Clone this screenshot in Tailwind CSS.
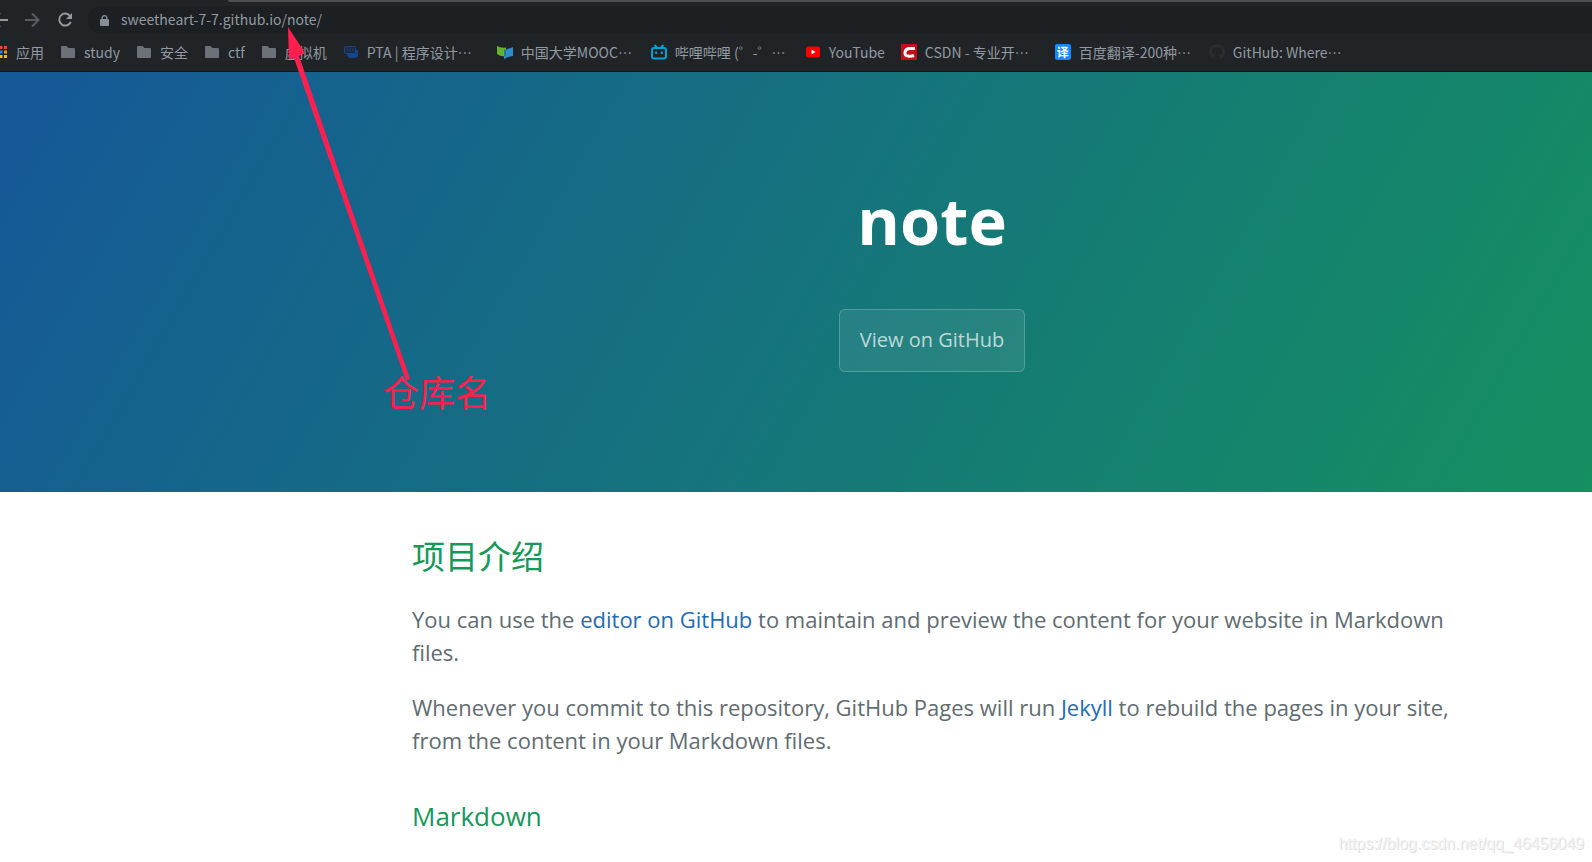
<!DOCTYPE html>
<html lang="zh-CN">

<head>
    <meta charset="UTF-8">
    <meta name="viewport" content="width=device-width, initial-scale=1.0">
    <title>note</title>
    <script src="https://cdn.jsdelivr.net/npm/@tailwindcss/browser@4"></script>
</head>

<body class="relative min-h-screen bg-white font-['Open_Sans','Noto_Sans_CJK_SC',sans-serif]">
    <!-- browser toolbar -->
    <div class="overflow-hidden bg-[#202427] border-b border-[#15191b] pb-px text-sm text-[#9299a1] font-['Noto_Sans_CJK_SC',sans-serif]">
        <div class="h-[6px]">
            <div class="ml-[228px] h-[2px] rounded-bl bg-[#4b4e52]"></div>
        </div>
        <div class="flex h-7 items-center">
            <button class="-ml-2 mr-4 text-[#9299a1]" aria-label="Back">
                <svg class="size-4" viewBox="0 0 16 16" fill="none" stroke="currentColor" stroke-width="2"><path d="M16 8H2M8 1L1.500 8L8 15"/></svg>
            </button>
            <button class="mr-[17px] text-[#565c61]" aria-label="Forward">
                <svg class="size-4" viewBox="0 0 16 16" fill="none" stroke="currentColor" stroke-width="2"><path d="M1 8H14M8 1.500L14.500 8L8 14.500"/></svg>
            </button>
            <button class="mr-[15px] text-[#9299a1]" aria-label="Reload">
                <svg class="size-4" viewBox="0 0 16 16"><path fill="none" stroke="currentColor" stroke-width="2" d="M13.200 4.200A6 6 0 1 0 13.800 9.800"/><path fill="currentColor" d="M15 1V7H9z"/></svg>
            </button>
            <div class="flex h-7 flex-1 items-center rounded-l-full bg-[#1c2022] pl-3">
                <svg class="mr-3 h-[11px] w-[9px]" viewBox="0 0 9 11" fill="#868d95"><path d="M1 4H8Q9 4 9 5V10Q9 11 8 11H1Q0 11 0 10V5Q0 4 1 4z"/><path fill="none" stroke="#868d95" stroke-width="1.300" d="M2.200 4.500V3A2.300 2.300 0 0 1 6.800 3V4.500"/></svg>
                <input type="text" aria-label="Address" value="sweetheart-7-7.github.io/note/" class="flex-1 bg-transparent pb-0.5 outline-none">
            </div>
        </div>
        <nav class="-ml-2 flex h-9 items-center gap-4 whitespace-nowrap">
            <a href="#" class="flex items-center gap-2">
                <svg class="size-4" viewBox="0 0 16 16">
                    <path fill="#ee4335" d="M3 2h3v3H3zM7.500 2h3v3h-3zM12 2h3v3h-3z"/>
                    <path fill="#34a853" d="M3 6.500h3v3H3z"/><path fill="#2a84f0" d="M7.500 6.500h3v3h-3z"/><path fill="#f29900" d="M12 6.500h3v3h-3z"/>
                    <path fill="#34a853" d="M3 11h3v3H3z"/><path fill="#fbbc05" d="M7.500 11h3v3h-3zM12 11h3v3h-3z"/>
                </svg>应用
            </a>
            <a href="#" class="flex items-center gap-2">
                <svg class="size-4" viewBox="0 0 16 16" fill="#6a7178"><path d="M2 2H6.500L8.500 4H14Q15 4 15 5V13Q15 14 14 14H2Q1 14 1 13V3Q1 2 2 2z"/></svg>study
            </a>
            <a href="#" class="flex items-center gap-2">
                <svg class="size-4" viewBox="0 0 16 16" fill="#6a7178"><path d="M2 2H6.500L8.500 4H14Q15 4 15 5V13Q15 14 14 14H2Q1 14 1 13V3Q1 2 2 2z"/></svg>安全
            </a>
            <a href="#" class="flex items-center gap-2">
                <svg class="size-4" viewBox="0 0 16 16" fill="#6a7178"><path d="M2 2H6.500L8.500 4H14Q15 4 15 5V13Q15 14 14 14H2Q1 14 1 13V3Q1 2 2 2z"/></svg>ctf
            </a>
            <a href="#" class="flex items-center gap-2">
                <svg class="size-4" viewBox="0 0 16 16" fill="#6a7178"><path d="M2 2H6.500L8.500 4H14Q15 4 15 5V13Q15 14 14 14H2Q1 14 1 13V3Q1 2 2 2z"/></svg>虚拟机
            </a>
            <a href="#" class="flex w-[138px] items-center gap-2">
                <svg class="size-4" viewBox="0 0 16 16"><path fill="#16458f" d="M4 6H14Q15 6 15 7V12Q15 13 14 13H13V14H6V13Q4 13 4 11z"/><rect x="1.500" y="2.500" width="11" height="7" rx="1" fill="#1d2a40" stroke="#174583"/><path fill="none" stroke="#174583" d="M5 4.500L3.500 6L5 7.500M9 4.500L10.500 6L9 7.500M7.500 4.500L6.500 7.500"/></svg>PTA | 程序设计…
            </a>
            <a href="#" class="flex w-[138px] items-center gap-2">
                <svg class="size-4" viewBox="0 0 16 16"><path fill="#65b32e" d="M0 2Q4 4.500 9 3.500V12Q4 13 0 10z"/><path fill="#2c8fc9" d="M7 6Q11 5 16 3V12Q11 12.500 7 15z"/><path fill="#247a8c" d="M7 6L9 5V12L7 12z"/></svg>中国大学MOOC…
            </a>
            <a href="#" class="flex w-[138px] items-center gap-2">
                <svg class="size-4" viewBox="0 0 16 16" fill="none" stroke="#00a1d6" stroke-width="2"><rect x="1" y="4" width="14" height="10.500" rx="2"/><path d="M3.500 1L6 3.500M12.500 1L10 3.500M5.200 7.500V10M10.800 7.500V10"/></svg>哔哩哔哩 (゜-゜…
            </a>
            <a href="#" class="flex items-center gap-2">
                <svg class="size-4" viewBox="0 0 16 16"><rect x="1" y="2.500" width="14" height="11" rx="2.500" fill="#f00"/><path fill="#fff" d="M6.500 5.500L10.500 8L6.500 10.500z"/></svg>YouTube
            </a>
            <a href="#" class="flex w-[138px] items-center gap-2">
                <svg class="size-4" viewBox="0 0 16 16"><path fill="#ca0c16" d="M0 0h16v16H0z"/><path fill="none" stroke="#fff" stroke-width="3" d="M14 4.500H9Q4.500 4.500 4 8.500Q3.500 12 7 12Q10 12.500 13 11.500"/></svg>CSDN - 专业开…
            </a>
            <a href="#" class="flex w-[138px] items-center gap-2">
                <span class="flex size-4 items-center justify-center rounded-xs bg-[#1787fb] text-xs font-bold leading-4 text-white">译</span>百度翻译-200种…
            </a>
            <a href="#" class="flex w-[138px] items-center gap-2">
                <svg class="size-4" viewBox="0 0 16 16" fill="#292e32"><path d="M8 0C3.580 0 0 3.580 0 8c0 3.540 2.290 6.530 5.470 7.590.4.070.55-.17.55-.38v-1.340c-2.230.48-2.700-1.070-2.700-1.070-.36-.92-.89-1.170-.89-1.170-.72-.5.060-.49.060-.49.8.060 1.230.82 1.230.82.71 1.230 1.870.87 2.330.66.070-.52.280-.87.500-1.070-1.780-.2-3.640-.89-3.640-3.950 0-.87.310-1.590.82-2.150-.08-.2-.36-1.020.080-2.120 0 0 .67-.21 2.200.82a7.600 7.600 0 0 1 4 0c1.530-1.040 2.200-.82 2.200-.82.44 1.100.16 1.920.080 2.120.51.56.82 1.270.82 2.150 0 3.070-1.870 3.750-3.650 3.950.29.25.54.73.54 1.480v2.190c0 .21.150.46.550.38A8 8 0 0 0 16 8c0-4.420-3.580-8-8-8z"/></svg>GitHub: Where…
            </a>
        </nav>
    </div>

    <!-- the site runs past both edges of the window -->
    <div class="overflow-hidden">
        <div class="-ml-7 -mr-[300px]">
            <header class="bg-[linear-gradient(120deg,#155799,#159957)] px-[120px] pt-[100px] pb-[120px] text-center text-white">
                <h1 class="mb-[41px] text-[65px] leading-[96px] font-bold">note</h1>
                <a href="#" class="inline-block rounded-md border border-white/20 bg-white/8 px-5 pt-3.5 pb-4 align-top text-xl leading-[31px] text-white/70">View on GitHub</a>
            </header>
            <main class="mx-auto max-w-[1280px] px-[120px] pt-10 text-[22px] leading-[33px] text-[#606c71]">
                <h2 class="mb-[21px] text-[33px] leading-[50px] text-[#159957]">项目介绍</h2>
                <p class="mb-[22px]">You can use the <a href="#" class="text-[#1e6bb8]">editor on GitHub</a> to maintain and preview the content for your website in Markdown files.</p>
                <p>Whenever you commit to this repository, GitHub Pages will run <a href="#" class="text-[#1e6bb8]">Jekyll</a> to rebuild the pages in your site, from the content in your Markdown files.</p>
                <h3 class="mt-10 text-[26px] leading-[39px] text-[#159957]">Markdown</h3>
            </main>
        </div>
    </div>

    <!-- annotation -->
    <svg class="absolute left-[280px] top-6 h-[360px] w-[140px]" viewBox="0 0 140 360" fill="#ff1f4f"><path d="M8 3L25 29L19 32L130 355L126 357L14 34L9 35z"/></svg>
    <span class="absolute left-[383px] top-[368px] text-4xl leading-[52px] text-[#ff1f4f]">仓库名</span>
    <span class="absolute right-2 bottom-2 font-['Liberation_Sans',sans-serif] text-base leading-5 text-[#f3f3f3] [text-shadow:1px_1px_0_#e0e0e0]">https://blog.csdn.net/qq_46456049</span>
</body>

</html>
